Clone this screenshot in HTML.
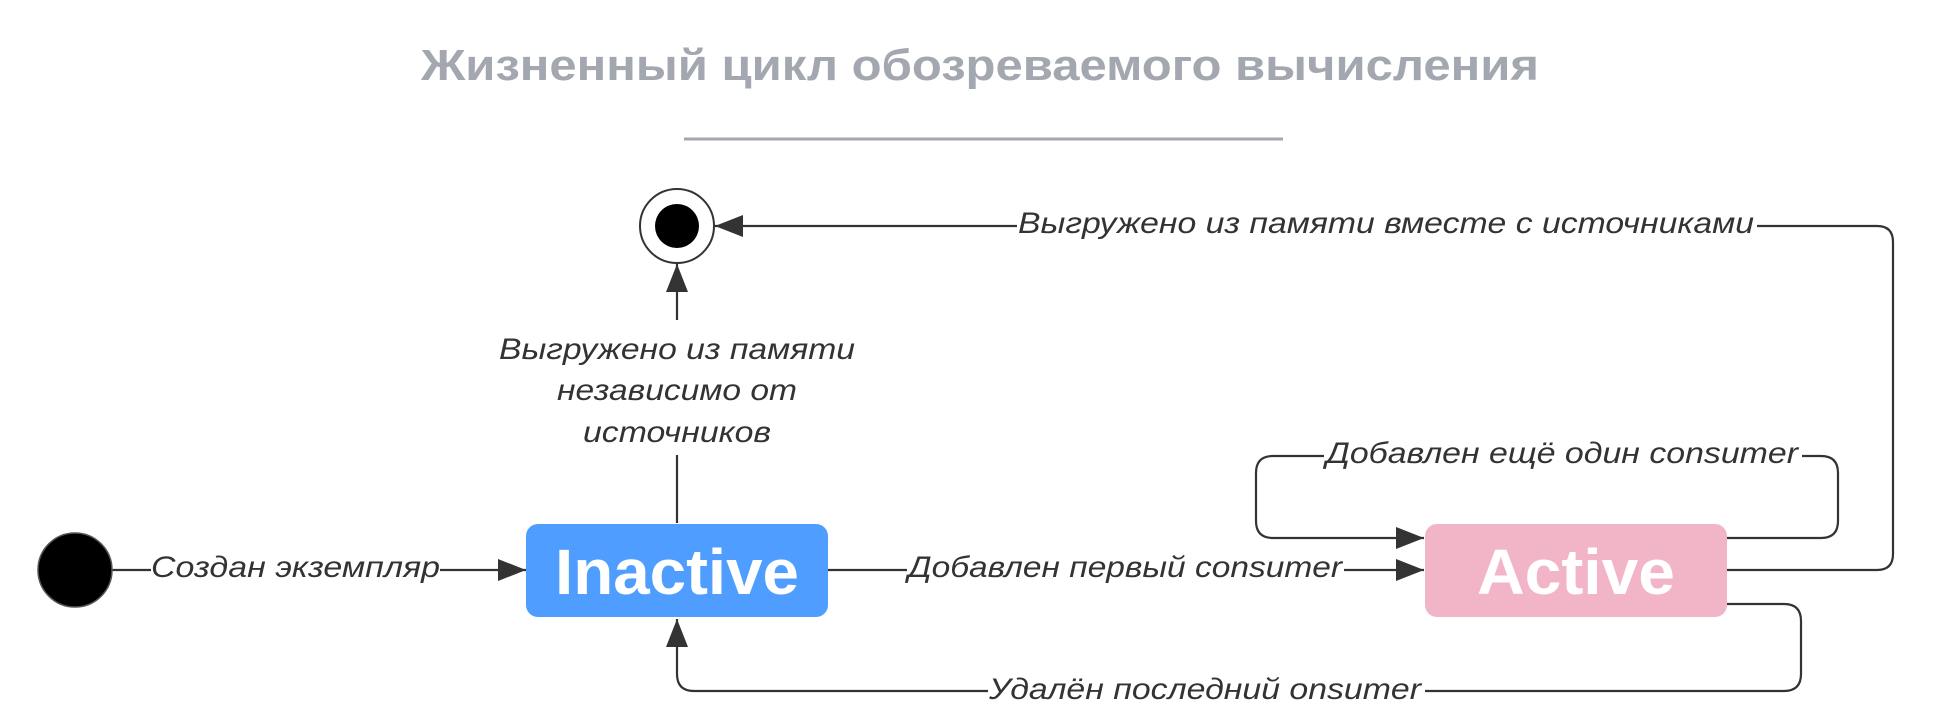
<!DOCTYPE html>
<html><head><meta charset="utf-8"><style>
html,body{margin:0;padding:0;background:#fff;width:1946px;height:721px;overflow:hidden}
svg{display:block}
text{font-family:"Liberation Sans",sans-serif}
.l{font-style:italic;font-size:30px;fill:#333}
</style></head><body>
<svg width="1946" height="721" viewBox="0 0 1946 721" xmlns="http://www.w3.org/2000/svg">
<defs>
<marker id="a" viewBox="0 0 28 22" refX="28" refY="11" markerWidth="28" markerHeight="22" markerUnits="userSpaceOnUse" orient="auto">
<path d="M0,0 L28,11 L0,22 Z" fill="#333"/></marker>
</defs>
<text x="980" y="80" text-anchor="middle" font-size="44" font-weight="bold" fill="#a3a7b0" textLength="1118" lengthAdjust="spacingAndGlyphs">Жизненный цикл обозреваемого вычисления</text>
<line x1="684" y1="139" x2="1283" y2="139" stroke="#a3a7b0" stroke-width="3"/>
<g fill="none" stroke="#333" stroke-width="2.2">
<line x1="112" y1="570" x2="526" y2="570" marker-end="url(#a)"/>
<line x1="828" y1="570" x2="1424" y2="570" marker-end="url(#a)"/>
<line x1="677" y1="523" x2="677" y2="264" marker-end="url(#a)"/>
<path d="M1725,570 H1877 Q1893,570 1893,554 V242 Q1893,226 1877,226 H715" marker-end="url(#a)"/>
<path d="M1725,538 H1821 Q1838,538 1838,521 V473 Q1838,456 1821,456 H1273 Q1256,456 1256,473 V521 Q1256,538 1273,538 H1424" marker-end="url(#a)"/>
<path d="M1725,604 H1784 Q1801,604 1801,621 V674 Q1801,691 1784,691 H694 Q677,691 677,674 V619" marker-end="url(#a)"/>
</g>
<circle cx="75" cy="570" r="37" fill="#000" stroke="#555" stroke-width="1.5"/>
<circle cx="677" cy="226" r="37" fill="#fff" stroke="#333" stroke-width="2"/>
<circle cx="677" cy="226" r="22" fill="#000"/>
<rect x="526" y="524" width="302" height="93" rx="12" fill="#4f9eff"/>
<text x="677" y="594" text-anchor="middle" font-size="64" font-weight="bold" fill="#fff" textLength="244" lengthAdjust="spacingAndGlyphs">Inactive</text>
<rect x="1425" y="524" width="302" height="93" rx="12" fill="#f2b5c8"/>
<text x="1576" y="594" text-anchor="middle" font-size="64" font-weight="bold" fill="#fff" textLength="198" lengthAdjust="spacingAndGlyphs">Active</text>
<g fill="#fff">
<rect x="151" y="550" width="289" height="40"/>
<rect x="907" y="550" width="437" height="40"/>
<rect x="1017" y="206" width="740" height="40"/>
<rect x="1324" y="436" width="478" height="40"/>
<rect x="988" y="671" width="437" height="40"/>
<rect x="489" y="320" width="380" height="135"/>
</g>
<text class="l" x="151" y="577" textLength="289" lengthAdjust="spacingAndGlyphs">Создан экземпляр</text>
<text class="l" x="908" y="577" textLength="434" lengthAdjust="spacingAndGlyphs">Добавлен первый consumer</text>
<text class="l" x="1018" y="233" textLength="736" lengthAdjust="spacingAndGlyphs">Выгружено из памяти вместе с источниками</text>
<text class="l" x="1326" y="463" textLength="472" lengthAdjust="spacingAndGlyphs">Добавлен ещё один consumer</text>
<text class="l" x="989" y="699" textLength="432" lengthAdjust="spacingAndGlyphs">Удалён последний onsumer</text>
<text class="l" x="677" y="359" text-anchor="middle" textLength="356" lengthAdjust="spacingAndGlyphs">Выгружено из памяти</text>
<text class="l" x="677" y="400" text-anchor="middle" textLength="240" lengthAdjust="spacingAndGlyphs">независимо от</text>
<text class="l" x="677" y="442" text-anchor="middle" textLength="188" lengthAdjust="spacingAndGlyphs">источников</text>
</svg>
</body></html>
